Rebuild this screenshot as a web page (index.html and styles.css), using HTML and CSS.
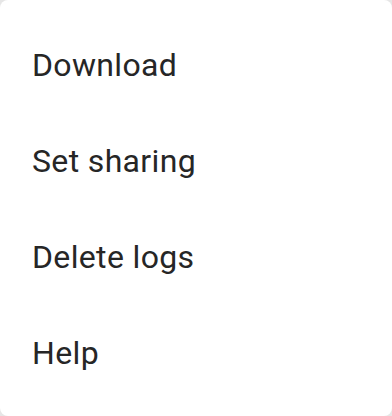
FILE: index.html
```html
<!DOCTYPE html>
<html>
<head>
<meta charset="utf-8">
<link rel="stylesheet" href="styles.css">
</head>
<body>
<div class="menu">
  <div class="item">Download</div>
  <div class="item">Set sharing</div>
  <div class="item">Delete logs</div>
  <div class="item">Help</div>
</div>
</body>
</html>
```
FILE: styles.css
```css
html, body {
  margin: 0;
  padding: 0;
  background: #e6e6e6;
}
.menu {
  width: 392px;
  height: 416px;
  box-sizing: border-box;
  background: #ffffff;
  border-radius: 8px;
  padding: 17px 0 15px;
  display: flex;
  flex-direction: column;
}
.item {
  height: 96px;
  display: flex;
  align-items: center;
  padding-left: 32px;
  font-family: Roboto, "Noto Sans", sans-serif;
  font-size: 32px;
  color: #262626;
  letter-spacing: 0.35px;
}
```
